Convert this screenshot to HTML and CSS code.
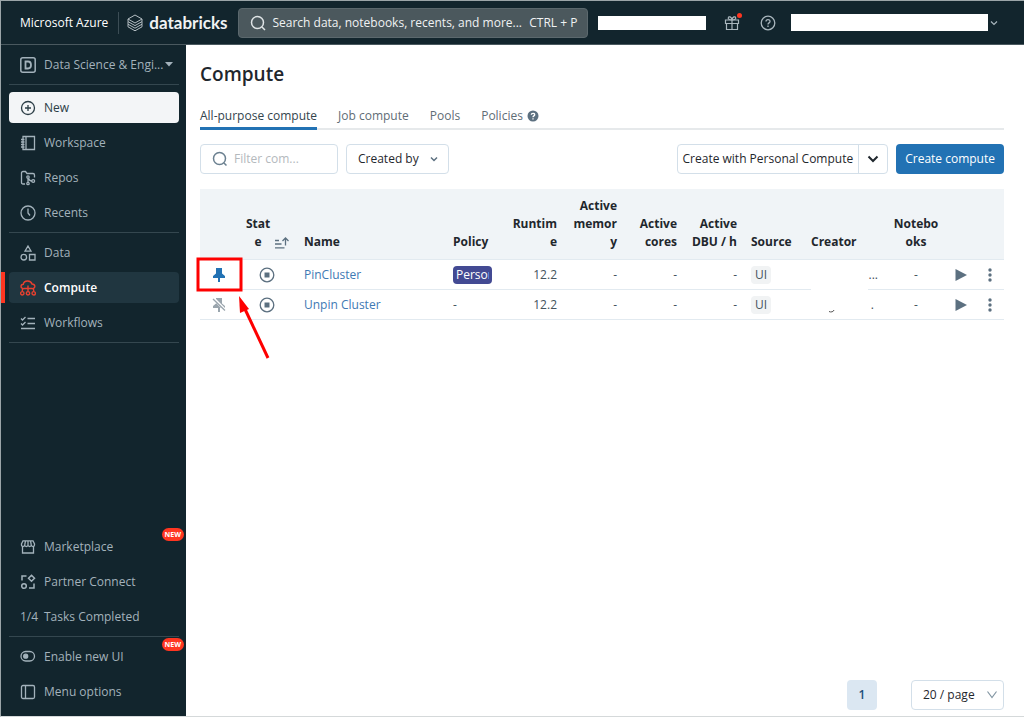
FILE: index.html
```html
<!DOCTYPE html>
<html lang="en">
  <head>
    <meta charset="UTF-8" />
    <meta name="viewport" content="width=device-width, initial-scale=1.0" />
    <title>Compute - Databricks</title>
    <link rel="stylesheet" href="styles.css" />
  </head>
  <body>
    <div class="app">
      <header class="topbar">
        <span class="azure">Microsoft Azure</span>
        <span class="topbar-divider"></span>
        <a class="brand" href="#">
          <svg width="16" height="18" viewBox="0 0 16 18" fill="none" stroke="#b4bec3" stroke-width="1" stroke-linejoin="round">
            <path d="M1 5 8 1l7 4-7 4z" />
            <path d="M1 5v2.600l7 4 7-4V5" />
            <path d="M1 7.600v2.600l7 4 7-4V7.600" />
            <path d="M1 10.200v2.600l7 4 7-4v-2.600" />
          </svg>
          <span class="brand-name">databricks</span>
        </a>
        <label class="global-search">
          <svg width="16" height="16" viewBox="0 0 16 16" fill="none" stroke="#dfe4e6" stroke-width="1.500">
            <circle cx="7.500" cy="7.500" r="6" />
            <path d="m12 12 3 3" />
          </svg>
          <input type="search" aria-label="Search" placeholder="Search data, notebooks, recents, and more..." />
          <kbd>CTRL + P</kbd>
        </label>
        <span class="redacted workspace-name"></span>
        <button class="icon-button gift" aria-label="What's new">
          <svg width="16" height="16" viewBox="0 0 16 16" fill="none" stroke="#a9b6bd" stroke-width="1.200">
            <path d="M1.500 5h13v3.500h-13zM2.500 8.500h11v6h-11zM8 5v9.500" />
            <path d="M8 5C5 5 4 4 4.300 2.800 4.800 1 7.500 1.500 8 5c.5-3.500 3.200-4 3.700-2.200C12 4 11 5 8 5z" />
          </svg>
          <span class="dot"></span>
        </button>
        <button class="icon-button" aria-label="Help">
          <svg width="16" height="16" viewBox="0 0 16 16" fill="none" stroke="#a9b6bd" stroke-width="1.300">
            <circle cx="8" cy="8" r="6.800" />
            <path d="M6 6.500C6 4 10 4 10 6.400 10 8 8 7.800 8 9.500M8 10.600V12" />
          </svg>
        </button>
        <span class="redacted user-name"></span>
        <button class="icon-button account" aria-label="Account">
          <svg width="8" height="8" viewBox="0 0 8 8" fill="none" stroke="#a9b6bd" stroke-width="1.200"><path d="m1 2.500 3 3 3-3" /></svg>
        </button>
      </header>

      <div class="layout">
        <nav class="sidebar">
          <button class="nav-item persona">
            <svg width="16" height="16" viewBox="0 0 16 16" fill="none" stroke="currentColor" stroke-width="1.500">
              <rect x=".8" y=".8" width="14.400" height="14.400" rx="2" />
              <path d="M5.500 4.500v7H8c4 0 4-7 0-7z" stroke-width="1.800" />
            </svg>
            <span>Data Science &amp; Engi...</span>
            <svg width="8" height="5" viewBox="0 0 8 5"><path d="M0 0h8L4 4.500z" fill="currentColor" /></svg>
          </button>
          <hr />
          <button class="nav-item new">
            <svg width="16" height="16" viewBox="0 0 16 16" fill="none" stroke="currentColor" stroke-width="1.300">
              <circle cx="8" cy="8" r="6.500" />
              <path d="M8 5v6M5 8h6" />
            </svg>
            New
          </button>
          <a class="nav-item" href="#">
            <svg width="16" height="16" viewBox="0 0 16 16" fill="none" stroke="currentColor" stroke-width="1.300">
              <path d="M3 1.500h11.500v13H3zM6 1.500v13M1 4.500h3.500M1 7h3.500M1 9.500h3.500M1 12h3.500" />
            </svg>
            Workspace
          </a>
          <a class="nav-item" href="#">
            <svg width="16" height="16" viewBox="0 0 16 16" fill="none" stroke="currentColor" stroke-width="1.300">
              <path d="M5 14H3c-1 0-1.500-.5-1.500-1.500V3c0-1 .5-1.500 1.500-1.500h2.500l1.500 2h6c1 0 1.500.5 1.500 1.500v2.500" />
              <circle cx="8" cy="7" r="1.200" />
              <circle cx="8" cy="13.500" r="1.200" />
              <circle cx="13.200" cy="11" r="1.400" />
              <path d="M8 8v4.500M8.500 8.500c.5 1.500 1.500 2.500 3.500 2.500" />
            </svg>
            Repos
          </a>
          <a class="nav-item" href="#">
            <svg width="16" height="16" viewBox="0 0 16 16" fill="none" stroke="currentColor" stroke-width="1.300">
              <circle cx="8" cy="8" r="7" />
              <path d="M8 3.500V8l2 2.500" />
            </svg>
            Recents
          </a>
          <hr />
          <a class="nav-item" href="#">
            <svg width="16" height="16" viewBox="0 0 16 16" fill="none" stroke="currentColor" stroke-width="1.300">
              <path d="m8 1 3 5.200H5zM9.500 9.500h5.500V15H9.500z" />
              <circle cx="3.800" cy="12.200" r="2.800" />
            </svg>
            Data
          </a>
          <a class="nav-item active" href="#">
            <svg width="16" height="16" viewBox="0 0 16 16" fill="none" stroke="#e8402f" stroke-width="1.400">
              <path d="M3 8.500C.3 8.200.4 4.500 3.300 4.300 4 0 10.800-.2 12 4c3.500 0 3.700 4.300 1 4.500M8 5.500v6M2.300 11.500V10c0-1 .7-1.500 1.700-1.500h8c1 0 1.700.5 1.700 1.500v1.500" />
              <circle cx="2.300" cy="13.300" r="1.700" />
              <circle cx="8" cy="13.300" r="1.700" />
              <circle cx="13.700" cy="13.300" r="1.700" />
            </svg>
            Compute
          </a>
          <a class="nav-item" href="#">
            <svg width="16" height="16" viewBox="0 0 16 16" fill="none" stroke="currentColor" stroke-width="1.300">
              <path d="m1 3.500 1.500 1.500L5.500 2M1 8.500 2.500 10l3-3M7.500 3.500H15M7.500 8.500H15M1 13.500h14" />
            </svg>
            Workflows
          </a>
          <hr />

          <div class="sidebar-bottom">
            <a class="nav-item" href="#">
              <svg width="16" height="16" viewBox="0 0 16 16" fill="none" stroke="currentColor" stroke-width="1.300">
                <path d="M2.500 7.500V14h11V7.500M3 1.800h10L14.500 5v1c0 2-3 2-3.200 0-.3 2-3 2-3.300 0-.3 2-3 2-3.300 0-.2 2-3.200 2-3.200 0V5zM5.500 2l-.8 4M10.500 2l.8 4M8 2v4" />
              </svg>
              Marketplace
              <span class="badge">NEW</span>
            </a>
            <a class="nav-item" href="#">
              <svg width="16" height="16" viewBox="0 0 16 16" fill="none" stroke="currentColor" stroke-width="1.500">
                <path d="M2 6.500V2h4.500M14 9.500V14H9M11.500 1.200l3 3-3 3-3-3z" />
                <circle cx="4" cy="12" r="2.300" />
              </svg>
              Partner Connect
            </a>
            <a class="nav-item tasks" href="#"><span class="count">1/4</span>Tasks Completed</a>
            <hr />
            <button class="nav-item">
              <svg width="16" height="16" viewBox="0 0 16 16" fill="none" stroke="currentColor" stroke-width="1.300">
                <rect x="1" y="2.500" width="13.500" height="9.500" rx="4.700" />
                <circle cx="5.700" cy="7.200" r="2" fill="currentColor" />
              </svg>
              Enable new UI
              <span class="badge">NEW</span>
            </button>
            <button class="nav-item">
              <svg width="16" height="16" viewBox="0 0 16 16" fill="none" stroke="currentColor" stroke-width="1.300">
                <rect x="1.500" y="1.500" width="13" height="13" rx="1.500" />
                <path d="M5.500 1.500v13" />
              </svg>
              Menu options
            </button>
          </div>
        </nav>

        <main class="content">
          <h1>Compute</h1>

          <div class="tabs">
            <a class="tab selected" href="#">All-purpose compute</a>
            <a class="tab" href="#">Job compute</a>
            <a class="tab" href="#">Pools</a>
            <a class="tab" href="#">
              Policies
              <svg width="12" height="12" viewBox="0 0 12 12">
                <circle cx="6" cy="6" r="5.500" fill="#5c7080" />
                <path d="M4.300 4.800c0-2 3.400-2 3.400-.1C7.700 6 6 5.800 6 7.200M6 8.200v1.300" fill="none" stroke="#fff" stroke-width="1.300" />
              </svg>
            </a>
          </div>

          <div class="toolbar">
            <label class="filter">
              <svg width="16" height="16" viewBox="0 0 16 16" fill="none" stroke="#6b8090" stroke-width="1.500">
                <circle cx="7.500" cy="7.500" r="6" />
                <path d="m12 12 2.500 2.500" />
              </svg>
              <input type="text" aria-label="Filter compute" placeholder="Filter com..." />
            </label>
            <div class="select created-by">
              <select aria-label="Created by">
                <option>Created by</option>
              </select>
              <svg width="8" height="8" viewBox="0 0 8 8" fill="none" stroke="#5c7080" stroke-width="1.500"><path d="m1 2.500 3 3 3-3" /></svg>
            </div>
            <div class="split">
              <button class="split-main">Create with Personal Compute</button>
              <button class="split-toggle" aria-label="More create options">
                <svg width="12" height="8" viewBox="0 0 12 8" fill="none" stroke="#1f272d" stroke-width="2"><path d="m1.500 1.500 4.500 4.500 4.500-4.500" /></svg>
              </button>
            </div>
            <button class="primary">Create compute</button>
          </div>

          <table class="clusters">
            <colgroup>
              <col class="col-pin" />
              <col class="col-tag" />
              <col />
              <col class="col-tag" />
              <col class="col-tag" />
              <col class="col-stat" />
              <col class="col-stat" />
              <col class="col-stat" />
              <col class="col-stat" />
              <col class="col-creator" />
              <col class="col-stat" />
              <col class="col-action" />
              <col class="col-action" />
            </colgroup>
            <thead>
              <tr>
                <th></th>
                <th>
                  <div class="sortable">
                    <span>Stat<br />e</span>
                    <svg width="14" height="12" viewBox="0 0 14 12" fill="none" stroke="#5c7080" stroke-width="1.300">
                      <path d="M0 3.500h4M0 7h6.500M0 10.800h9.500M10.500 8.500V1M7.500 4l3-3 3 3" />
                    </svg>
                  </div>
                </th>
                <th>Name</th>
                <th>Policy</th>
                <th class="num">Runtim<br />e</th>
                <th class="num">Active<br />memor<br />y</th>
                <th class="num">Active<br />cores</th>
                <th class="num">Active<br />DBU / h</th>
                <th>Source</th>
                <th>Creator</th>
                <th class="center">Notebo<br />oks</th>
                <th></th>
                <th></th>
              </tr>
            </thead>
            <tbody>
              <tr>
                <td class="pin-cell">
                  <button class="icon-button" aria-label="Unpin">
                    <svg width="12" height="16" viewBox="0 0 12 16" fill="#2272b4">
                      <path d="M3 1h6v5.500l3 2.500v2H7v4H5v-4H0V9l3-2.500z" />
                    </svg>
                  </button>
                  <svg class="callout" width="76" height="106" viewBox="0 0 76 106">
                    <rect x="2" y="2" width="43" height="31" fill="none" stroke="#fe0000" stroke-width="3" />
                    <path d="M48 50 72 101" stroke="#fe0000" stroke-width="3" />
                    <path d="m43 39 10 13-9 4z" fill="#fe0000" />
                  </svg>
                </td>
                <td class="state">
                  <svg width="16" height="16" viewBox="0 0 16 16"><circle cx="8" cy="8" r="6.800" fill="none" stroke="#5c7080" stroke-width="1.300" /><path d="M5.500 5.500h5v5h-5z" fill="#5c7080" /></svg>
                </td>
                <td><a href="#">PinCluster</a></td>
                <td><span class="policy-tag"><span>Person</span></span></td>
                <td class="num">12.2</td>
                <td class="num">-</td>
                <td class="num">-</td>
                <td class="num">-</td>
                <td><span class="source-tag">UI</span></td>
                <td class="creator"><span class="creator-mask"></span>...</td>
                <td class="center">-</td>
                <td class="action">
                  <button class="icon-button" aria-label="Start"><svg width="12" height="12" viewBox="0 0 12 12"><path d="M.5 0 12 6 .5 12z" fill="#5c7080" /></svg></button>
                </td>
                <td class="action">
                  <button class="icon-button" aria-label="More"><svg width="4" height="14" viewBox="0 0 4 14" fill="#5c7080"><circle cx="2" cy="2" r="1.700" /><circle cx="2" cy="7" r="1.700" /><circle cx="2" cy="12" r="1.700" /></svg></button>
                </td>
              </tr>
              <tr>
                <td class="pin-cell">
                  <button class="icon-button" aria-label="Pin">
                    <svg width="14" height="16" viewBox="0 0 14 16" fill="#9aa5ad">
                      <path d="M4 1h6v5.500l3 2.500v2H8v4H6v-4H1V9l3-2.500z" />
                      <path d="m1 1 12 12" stroke="#fff" stroke-width="3" />
                      <path d="m1 2 12 11.500" stroke="#9aa5ad" stroke-width="1.300" />
                    </svg>
                  </button>
                </td>
                <td class="state">
                  <svg width="16" height="16" viewBox="0 0 16 16"><circle cx="8" cy="8" r="6.800" fill="none" stroke="#5c7080" stroke-width="1.300" /><path d="M5.500 5.500h5v5h-5z" fill="#5c7080" /></svg>
                </td>
                <td><a href="#">Unpin Cluster</a></td>
                <td>-</td>
                <td class="num">12.2</td>
                <td class="num">-</td>
                <td class="num">-</td>
                <td class="num">-</td>
                <td><span class="source-tag">UI</span></td>
                <td class="creator">
                  <div class="creator-rest">
                    <svg width="8" height="18" viewBox="0 0 8 18" fill="none" stroke="#555"><path d="M1 15.500c2 1 4.500.3 5-1.500" /></svg>
                    <span>.</span>
                  </div>
                </td>
                <td class="center">-</td>
                <td class="action">
                  <button class="icon-button" aria-label="Start"><svg width="12" height="12" viewBox="0 0 12 12"><path d="M.5 0 12 6 .5 12z" fill="#5c7080" /></svg></button>
                </td>
                <td class="action">
                  <button class="icon-button" aria-label="More"><svg width="4" height="14" viewBox="0 0 4 14" fill="#5c7080"><circle cx="2" cy="2" r="1.700" /><circle cx="2" cy="7" r="1.700" /><circle cx="2" cy="12" r="1.700" /></svg></button>
                </td>
              </tr>
            </tbody>
          </table>

          <div class="pagination">
            <button class="page">1</button>
            <div class="select page-size">
              <select aria-label="Rows per page">
                <option>20 / page</option>
              </select>
              <svg width="10" height="8" viewBox="0 0 10 8" fill="none" stroke="#8396a3" stroke-width="1.200"><path d="m.5.500 4.500 6 4.500-6" /></svg>
            </div>
          </div>
        </main>
      </div>
    </div>
  </body>
</html>
```
FILE: styles.css
```css
* {
  box-sizing: border-box;
  margin: 0;
  padding: 0;
}

body {
  font-family: "Open Sans", "Noto Sans", sans-serif;
  font-size: 12px;
  line-height: 18px;
  color: #1f272d;
  background: #fff;
}

button,
input,
select {
  font: inherit;
  color: inherit;
  background: none;
  border: none;
  outline: none;
}

button {
  cursor: pointer;
}

a {
  color: inherit;
  text-decoration: none;
}

svg {
  display: block;
  flex-shrink: 0;
}

.app {
  display: flex;
  flex-direction: column;
  min-height: 100vh;
  border: 1px solid #9ba5a8;
  border-right: none;
  border-bottom-color: #d5d9da;
}

/* top bar */
.topbar {
  display: flex;
  align-items: center;
  height: 44px;
  padding: 0 20px 0 19px;
  background: #12252d;
  border-bottom: 1px solid #4a595f;
}

.azure {
  color: #fff;
  font-weight: 500;
  white-space: nowrap;
}

.topbar-divider {
  width: 1px;
  height: 22px;
  margin: 0 8px 0 10px;
  background: #3c4d55;
}

.brand {
  display: flex;
  align-items: center;
  gap: 6px;
  margin-right: 11px;
}

.brand-name {
  font-family: "Lato", sans-serif;
  font-size: 17px;
  font-weight: 700;
  color: #f0f2f3;
}

.global-search {
  display: flex;
  align-items: center;
  flex: 0 1 350px;
  gap: 6px;
  height: 30px;
  padding: 0 10px 0 11px;
  border: 1px solid #5b686d;
  border-radius: 4px;
  background: #4b585d;
  color: #f0f2f3;
}

.global-search input {
  flex: 1;
  min-width: 0;
  appearance: none;
}

.global-search input::-webkit-search-cancel-button {
  display: none;
}

.global-search input::placeholder {
  color: #f0f2f3;
}

.global-search kbd {
  font-family: inherit;
  white-space: nowrap;
}

.redacted {
  background: #fff;
}

.workspace-name {
  width: 108px;
  height: 14px;
  margin: 0 18px 0 10px;
}

.icon-button {
  display: flex;
  align-items: center;
  justify-content: center;
}

.gift {
  position: relative;
  margin-right: 20px;
}

.dot {
  position: absolute;
  top: -2px;
  right: -2px;
  width: 5px;
  height: 5px;
  border-radius: 50%;
  background: #ff3621;
}

.user-name {
  width: 197px;
  height: 17px;
  margin: 0 2px 0 15px;
}

/* sidebar */
.layout {
  display: flex;
  flex: 1;
}

.sidebar {
  display: flex;
  flex-direction: column;
  gap: 4px;
  width: 185px;
  padding: 4px 7px 9px 8px;
  background: #12252d;
  color: #a3b2bb;
}

.sidebar hr {
  border: none;
  border-top: 1px solid #34474f;
}

.nav-item {
  position: relative;
  display: flex;
  align-items: center;
  gap: 8px;
  width: 100%;
  height: 31px;
  padding: 0 11px;
  border-radius: 4px;
  font-weight: 500;
  text-align: left;
  white-space: nowrap;
}

.persona svg:last-child {
  margin-left: -6px;
}

.new {
  margin-top: 3px;
  background: #f3f5f7;
  color: #2b3d46;
}

.active {
  background: #203640;
  color: #fff;
  font-weight: 600;
}

.active::before {
  content: "";
  position: absolute;
  top: 0;
  bottom: 0;
  left: -8px;
  width: 4px;
  background: #ff3621;
}

.sidebar-bottom {
  display: flex;
  flex-direction: column;
  gap: 4px;
  margin-top: auto;
}

.tasks .count {
  width: 16px;
}

.badge {
  position: absolute;
  top: -3px;
  right: -5px;
  padding: 0 3px;
  border-radius: 7px;
  background: #ff3621;
  color: #fff;
  font-size: 7px;
  font-weight: 700;
  line-height: 13px;
}

/* main */
.content {
  display: flex;
  flex-direction: column;
  flex: 1;
  min-width: 0;
  padding: 15px 20px 6px 14px;
}

h1 {
  font-size: 19px;
  font-weight: 600;
  line-height: 28px;
}

.tabs {
  display: flex;
  gap: 21px;
  margin-top: 16px;
  border-bottom: 2px solid #e6e9eb;
  color: #5f6d76;
}

.tab {
  display: flex;
  align-items: center;
  gap: 4px;
  margin-bottom: -2px;
  border-bottom: 3px solid transparent;
  line-height: 23px;
}

.tab.selected {
  color: #33444d;
  border-color: #2272b4;
}

.toolbar {
  display: flex;
  gap: 8px;
  margin: 14px 0 15px;
}

.filter {
  display: flex;
  align-items: center;
  gap: 6px;
  width: 138px;
  height: 30px;
  padding: 0 10px 0 11px;
  border: 1px solid #d3dfe9;
  border-radius: 4px;
}

.filter input {
  flex: 1;
  min-width: 0;
}

.filter input::placeholder {
  color: #b4b9bd;
}

.select {
  position: relative;
  display: flex;
}

.select select {
  appearance: none;
  width: 100%;
  height: 30px;
  padding: 0 11px;
  border: 1px solid #d3dfe9;
  border-radius: 4px;
}

.select svg {
  position: absolute;
  top: 11px;
  right: 11px;
  pointer-events: none;
}

.created-by {
  width: 103px;
  font-weight: 500;
}

.split {
  display: flex;
  height: 30px;
  margin-left: auto;
  border: 1px solid #d3dfe9;
  border-radius: 4px;
}

.split-main {
  padding: 0 5px;
}

.split-toggle {
  padding: 0 8px;
  border-left: 1px solid #d3dfe9;
}

.primary {
  height: 30px;
  padding: 0 9px;
  border-radius: 4px;
  background: #2272b4;
  color: #fff;
}

/* clusters table */
.clusters {
  width: 100%;
  table-layout: fixed;
  border-collapse: collapse;
}

.col-pin {
  width: 38px;
}

.col-tag {
  width: 59px;
}

.col-stat {
  width: 60px;
}

.col-creator {
  width: 82px;
}

.col-action {
  width: 29px;
}

.clusters th {
  padding: 8px 7px;
  background: #f0f4f7;
  border-bottom: 1px solid #e2eaf0;
  font-weight: 700;
  text-align: left;
  vertical-align: bottom;
  white-space: nowrap;
}

.clusters td {
  height: 30px;
  padding: 0 7px;
  border-bottom: 1px solid #e2eaf0;
  color: #44535d;
}

.clusters td a {
  color: #4079b4;
}

.clusters .num {
  text-align: right;
}

.clusters .center {
  text-align: center;
}

.clusters .state {
  padding-left: 21px;
}

.clusters .sortable {
  display: flex;
  align-items: flex-end;
  gap: 5px;
  padding-left: 1px;
  text-align: center;
}

.sortable svg {
  margin-bottom: 2px;
}

.clusters .pin-cell,
.clusters .action {
  position: relative;
  padding: 0;
}

.pin-cell .icon-button,
.action .icon-button {
  width: 100%;
}

.callout {
  position: absolute;
  top: -3px;
  left: -4px;
  pointer-events: none;
}

.policy-tag {
  display: block;
  width: 39px;
  padding: 0 3px;
  border-radius: 4px;
  background: #434a93;
  color: #fff;
}

.policy-tag span {
  display: block;
  overflow: hidden;
}

.source-tag {
  display: inline-block;
  padding: 0 4px;
  border-radius: 4px;
  background: #f1f3f4;
}

.clusters .creator {
  position: relative;
  padding-right: 8px;
  text-align: right;
}

.creator-mask {
  position: absolute;
  top: 2px;
  bottom: -2px;
  left: 7px;
  right: 18px;
  background: #fff;
}

.creator-rest {
  display: flex;
  justify-content: space-between;
  padding: 0 4px 0 17px;
}

/* pagination */
.pagination {
  display: flex;
  justify-content: flex-end;
  gap: 34px;
  margin-top: auto;
}

.page {
  width: 30px;
  height: 30px;
  border-radius: 4px;
  background: #dbe7f2;
  color: #1d4e7a;
  font-weight: 600;
}

.page-size {
  width: 93px;
}

.page-size svg {
  right: 7px;
}
```
